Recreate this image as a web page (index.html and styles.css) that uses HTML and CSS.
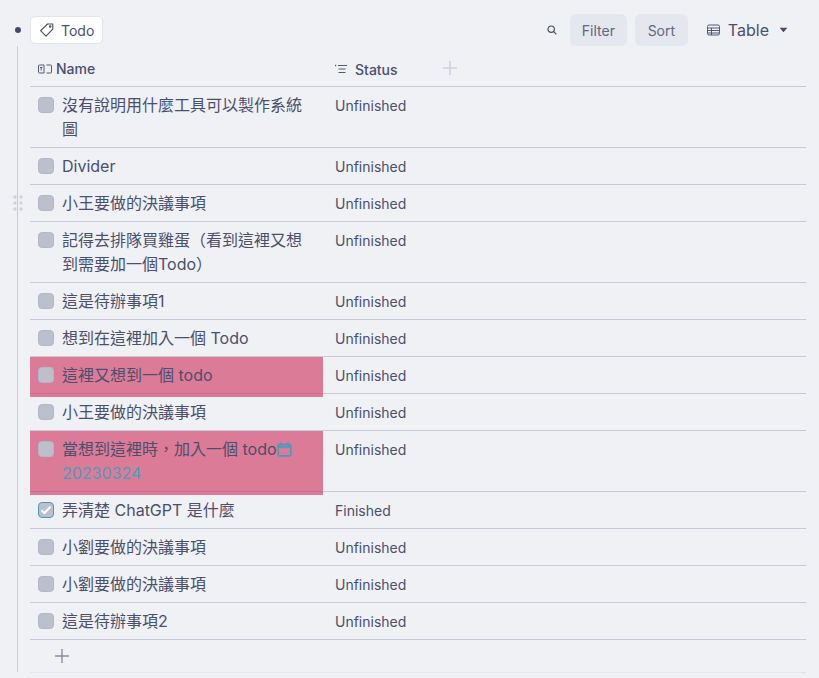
FILE: index.html
```html
<!DOCTYPE html>
<html lang="zh-Hant">
<head>
<meta charset="utf-8">
<title>Todo</title>
<link rel="stylesheet" href="styles.css">
</head>
<body>
<div class="page">
  <div class="bullet-col">
    <span class="bullet"></span>
    <span class="guide"></span>
    <svg class="grip" width="10" height="16" viewBox="0 0 10 16"><g fill="#d0d3de"><circle cx="2" cy="2" r="1.7"/><circle cx="8" cy="2" r="1.7"/><circle cx="2" cy="8" r="1.7"/><circle cx="8" cy="8" r="1.7"/><circle cx="2" cy="14" r="1.7"/><circle cx="8" cy="14" r="1.7"/></g></svg>
  </div>
  <div class="content">
    <div class="toolbar">
      <div class="tag">
        <svg width="16" height="16" viewBox="0 0 16 16" fill="none" stroke="#454a68" stroke-width="1.1" stroke-linejoin="round"><path d="M1.6 8.6 8.6 2h5.2v5.2L7 14.2z"/><circle cx="11.2" cy="4.6" r=".7"/></svg>
        <span>Todo</span>
      </div>
      <div class="tools">
        <svg class="search" width="10" height="10" viewBox="0 0 10 10" fill="none" stroke="#454a68" stroke-width="1.2"><circle cx="4.2" cy="4.2" r="3.2"/><path d="M6.6 6.6 9.4 9.4"/></svg>
        <button class="btn btn-filter">Filter</button>
        <button class="btn btn-sort">Sort</button>
        <div class="view">
          <svg width="13" height="12" viewBox="0 0 13 12" fill="none" stroke="#545875" stroke-width="1"><rect x=".5" y="1" width="12" height="10" rx="1.5"/><path d="M.5 4h12M.5 6.5h12M.5 9h12M4.5 4v7"/></svg>
          <span>Table</span>
          <svg class="caret" width="9" height="6" viewBox="0 0 9 6"><path d="M.6.8h7.8L4.9 4.8a.6.6 0 0 1-.9 0z" fill="#454a68"/></svg>
        </div>
      </div>
    </div>
    <div class="table">
      <div class="row head">
        <div class="name-cell head-name">
          <svg width="14" height="10" viewBox="0 0 14 10" fill="none" stroke="#545875" stroke-width="1"><path d="M6 1H1.5a1 1 0 0 0-1 1v6a1 1 0 0 0 1 1H6V1zM8.5 1h4a1 1 0 0 1 1 1v6a1 1 0 0 1-1 1h-4M3.2 3.5v3M2 3.5h2.4"/></svg>
          <span>Name</span>
        </div>
        <div class="status-cell head-status">
          <svg width="12" height="10" viewBox="0 0 12 10" fill="none" stroke="#545875" stroke-width="1"><path d="M3 1.5h9M3.5 5h7M3.5 8.5h7"/><path d="M0 1.5h1.2" stroke-width="1.4"/></svg>
          <span>Status</span>
          <svg class="add-col" width="14" height="14" viewBox="0 0 14 14" stroke="#cfd1de" stroke-width="1.6"><path d="M7 0v14M0 7h14"/></svg>
        </div>
      </div>
      <div class="row"><div class="name-cell"><span class="check"></span><span class="label">沒有說明用什麼工具可以製作系統圖</span></div><div class="status-cell">Unfinished</div></div>
      <div class="row"><div class="name-cell"><span class="check"></span><span class="label">Divider</span></div><div class="status-cell">Unfinished</div></div>
      <div class="row"><div class="name-cell"><span class="check"></span><span class="label">小王要做的決議事項</span></div><div class="status-cell">Unfinished</div></div>
      <div class="row"><div class="name-cell"><span class="check"></span><span class="label">記得去排隊買雞蛋（看到這裡又想到需要加一個Todo）</span></div><div class="status-cell">Unfinished</div></div>
      <div class="row"><div class="name-cell"><span class="check"></span><span class="label">這是待辦事項1</span></div><div class="status-cell">Unfinished</div></div>
      <div class="row"><div class="name-cell"><span class="check"></span><span class="label">想到在這裡加入一個 Todo</span></div><div class="status-cell">Unfinished</div></div>
      <div class="row"><div class="name-cell"><span class="mark"></span><span class="check"></span><span class="label">這裡又想到一個 todo</span></div><div class="status-cell">Unfinished</div></div>
      <div class="row"><div class="name-cell"><span class="check"></span><span class="label">小王要做的決議事項</span></div><div class="status-cell">Unfinished</div></div>
      <div class="row"><div class="name-cell"><span class="mark"></span><span class="check"></span><span class="label">當想到這裡時，加入一個 todo<svg class="cal" width="15" height="15" viewBox="0 0 15 15" fill="none" stroke="#4a9bb5" stroke-width="1.7"><rect x="1.2" y="2.4" width="12.6" height="11.4" rx="1.2"/><path d="M1 4.6h13" stroke-width="2.2"/><path d="M4 .4v2.6M11 .4v2.6" stroke-width="1.4"/></svg><span class="date">20230324</span></span></div><div class="status-cell">Unfinished</div></div>
      <div class="row"><div class="name-cell"><span class="check done"><svg width="12" height="10" viewBox="0 0 12 10" fill="none" stroke="#fff" stroke-width="2"><path d="M1.5 5.2 4.5 8l6-6.4"/></svg></span><span class="label">弄清楚 ChatGPT 是什麼</span></div><div class="status-cell">Finished</div></div>
      <div class="row"><div class="name-cell"><span class="check"></span><span class="label">小劉要做的決議事項</span></div><div class="status-cell">Unfinished</div></div>
      <div class="row"><div class="name-cell"><span class="check"></span><span class="label">小劉要做的決議事項</span></div><div class="status-cell">Unfinished</div></div>
      <div class="row"><div class="name-cell"><span class="check"></span><span class="label">這是待辦事項2</span></div><div class="status-cell">Unfinished</div></div>
      <div class="add-row"><svg width="14" height="14" viewBox="0 0 14 14" stroke="#8a8da3" stroke-width="1.4"><path d="M7 0v14M0 7h14"/></svg></div>
    </div>
  </div>
</div>
</body>
</html>
```
FILE: styles.css
```css
* { box-sizing: border-box; }
html, body { margin: 0; padding: 0; height: 100%; overflow: hidden; }
body {
  background: #f0f1f5;
  color: #4a4f6c;
  font-family: Inter, "Noto Sans CJK TC", sans-serif;
}
.page { display: flex; padding: 14px 13px 0 0; }
.bullet-col {
  position: relative;
  width: 30px;
  flex: none;
  display: flex;
  flex-direction: column;
  align-items: center;
}
.bullet {
  width: 6px;
  height: 6px;
  margin: 13px 0 0 6px;
  border-radius: 50%;
  background: #454a68;
}
.guide {
  width: 1px;
  height: 626px;
  margin: 13px 0 0 5px;
  background: #c9cad6;
}
.grip { position: absolute; left: 13px; top: 181px; }
.content { flex: 1; min-width: 0; }
.toolbar {
  display: flex;
  justify-content: space-between;
  align-items: center;
  height: 32px;
}
.tag {
  display: flex;
  align-items: center;
  gap: 6px;
  height: 28px;
  padding: 0 8px;
  border: 1px solid #e3e4ec;
  border-radius: 5px;
  background: #fff;
  font-size: 14px;
}
.tools { display: flex; align-items: center; margin-right: 18px; }
.search { margin-right: 13px; }
.btn {
  height: 32px;
  padding: 0;
  border: 0;
  border-radius: 6px;
  background: #e5e7ef;
  color: #62667f;
  font: 14px Inter, sans-serif;
}
.btn-filter { width: 57px; margin-right: 8px; }
.btn-sort { width: 53px; margin-right: 19px; }
.view { display: flex; align-items: center; font-size: 16px; }
.view span { margin: 0 10px 0 8px; }
.table { margin-top: 8px; }
.row { display: flex; border-bottom: 1px solid #c9cad9; }
.row.head { height: 33px; padding-bottom: 2px; align-items: center; font-size: 14px; font-weight: 500; }
.name-cell {
  position: relative;
  flex: none;
  width: 293px;
  display: flex;
  align-items: flex-start;
  padding: 6px 8px;
  font-size: 16px;
  line-height: 24px;
}
.head-name { padding: 0 0 0 8px; align-items: center; gap: 4px; font-size: 14px; }
.mark {
  position: absolute;
  left: 0;
  right: 0;
  top: 0;
  bottom: -4px;
  background: rgba(208, 50, 95, 0.62);
  z-index: 1;
}
.check {
  position: relative;
  z-index: 2;
  flex: none;
  width: 16px;
  height: 16px;
  margin: 4px 8px 0 0;
  border: 1px solid #b3b7c6;
  border-radius: 4px;
  background: #bcc0cd;
  display: flex;
  align-items: center;
  justify-content: center;
}
.check.done { border-color: #4c9cb5; }
.label { position: relative; z-index: 2; min-width: 0; }
.cal { vertical-align: -2px; }
.date { display: block; color: #45a0bc; }
.status-cell {
  flex: 1;
  padding: 6px 0 0 12px;
  font-size: 14px;
  line-height: 26px;
}
.head-status {
  display: flex;
  align-items: center;
  padding-top: 0;
  line-height: normal;
}
.head-status span { margin-left: 8px; }
.add-col { margin-left: 45px; margin-top: -2px; }
.add-row {
  display: flex;
  height: 33px;
  padding: 9px 0 0 25px;
  border-bottom: 1px solid #e3e4ec;
}
```
